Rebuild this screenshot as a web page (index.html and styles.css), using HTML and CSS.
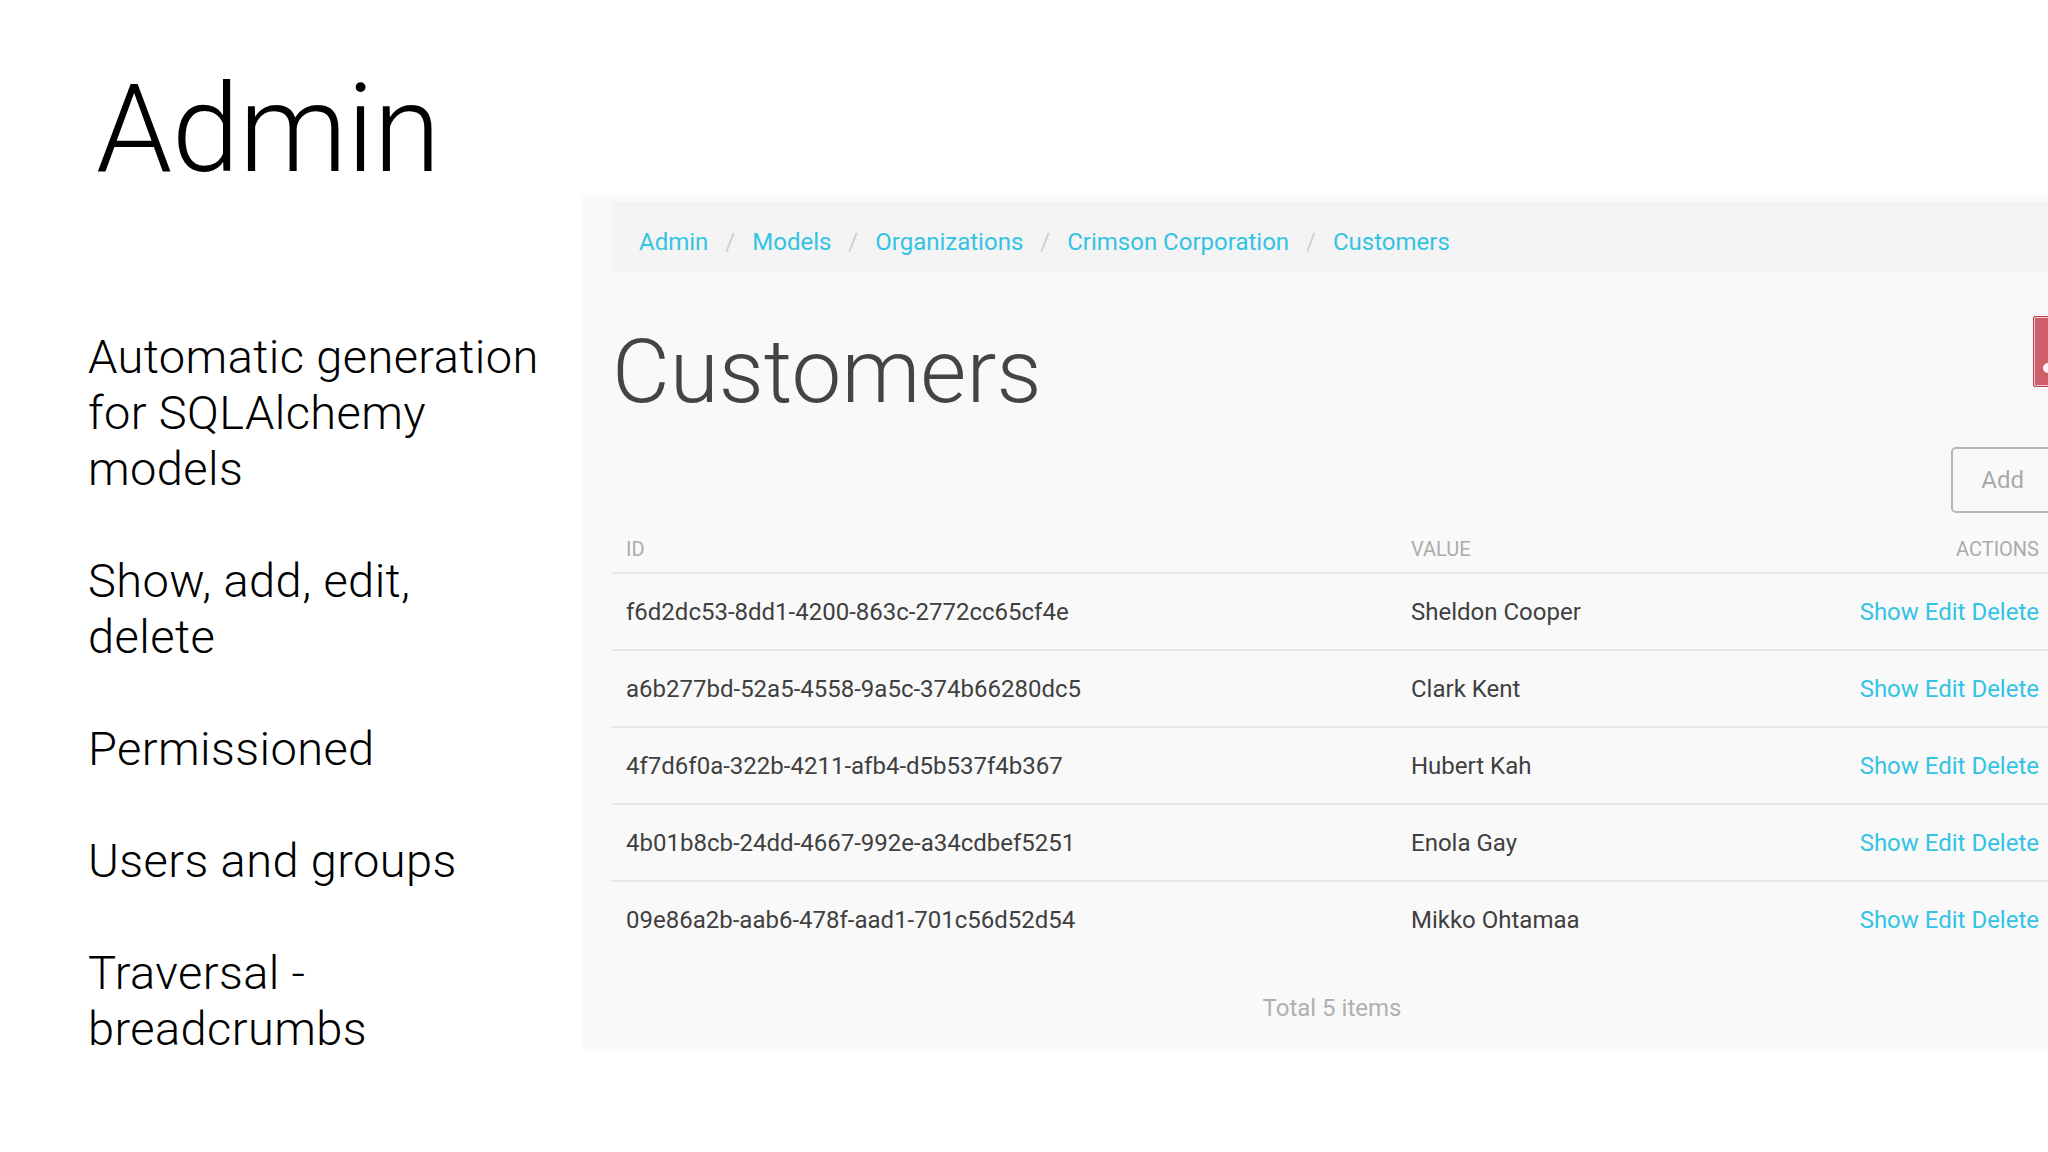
FILE: index.html
```html
<!DOCTYPE html>
<html lang="en">
<head>
<meta charset="utf-8">
<title>Admin</title>
<link rel="stylesheet" href="styles.css">
</head>
<body>
<div class="slide">
  <h1 class="title">Admin</h1>
  <div class="body">
    <div class="points">
      <p>Automatic generation<br>for SQLAlchemy<br>models</p>
      <p>Show, add, edit,<br>delete</p>
      <p>Permissioned</p>
      <p>Users and groups</p>
      <p>Traversal -<br>breadcrumbs</p>
    </div>
    <div class="panel">
      <nav class="crumbs">
        <a href="#">Admin</a><span class="sep">/</span>
        <a href="#">Models</a><span class="sep">/</span>
        <a href="#">Organizations</a><span class="sep">/</span>
        <a href="#">Crimson Corporation</a><span class="sep">/</span>
        <a href="#">Customers</a>
      </nav>
      <div class="headrow">
        <h2 class="heading">Customers</h2>
        <button class="danger"><span class="dot"></span></button>
      </div>
      <div class="toolbar">
        <button class="add">Add</button>
      </div>
      <table class="grid">
        <thead>
          <tr><th class="c-id">ID</th><th class="c-val">Value</th><th class="c-act">Actions</th></tr>
        </thead>
        <tbody>
          <tr><td>f6d2dc53-8dd1-4200-863c-2772cc65cf4e</td><td>Sheldon Cooper</td><td class="c-act"><a href="#">Show</a> <a href="#">Edit</a> <a href="#">Delete</a></td></tr>
          <tr><td>a6b277bd-52a5-4558-9a5c-374b66280dc5</td><td>Clark Kent</td><td class="c-act"><a href="#">Show</a> <a href="#">Edit</a> <a href="#">Delete</a></td></tr>
          <tr><td>4f7d6f0a-322b-4211-afb4-d5b537f4b367</td><td>Hubert Kah</td><td class="c-act"><a href="#">Show</a> <a href="#">Edit</a> <a href="#">Delete</a></td></tr>
          <tr><td>4b01b8cb-24dd-4667-992e-a34cdbef5251</td><td>Enola Gay</td><td class="c-act"><a href="#">Show</a> <a href="#">Edit</a> <a href="#">Delete</a></td></tr>
          <tr><td>09e86a2b-aab6-478f-aad1-701c56d52d54</td><td>Mikko Ohtamaa</td><td class="c-act"><a href="#">Show</a> <a href="#">Edit</a> <a href="#">Delete</a></td></tr>
        </tbody>
      </table>
      <div class="total">Total 5 items</div>
    </div>
  </div>
</div>
</body>
</html>
```

FILE: styles.css
```css
html, body {
  margin: 0;
  padding: 0;
}
body {
  width: 2048px;
  height: 1152px;
  overflow: hidden;
  background: #ffffff;
  font-family: Roboto, "Liberation Sans", sans-serif;
}
.slide {
  padding-top: 69px;
}
.title {
  margin: 0;
  padding-left: 96px;
  font-weight: 300;
  font-size: 122px;
  line-height: 122px;
  letter-spacing: -0.5px;
  color: #000;
}
.body {
  display: flex;
  margin-top: 5px;
}
.points {
  flex: 0 0 582px;
  box-sizing: border-box;
  padding: 133px 0 0 88px;
  font-weight: 300;
  font-size: 47px;
  line-height: 56px;
  letter-spacing: 0.4px;
  color: #000;
}
.points p {
  margin: 0 0 56px;
}
.panel {
  flex: 0 0 1500px;
  box-sizing: border-box;
  height: 853px;
  padding: 6px 30px 0;
  background: #f9f9fa;
}
.crumbs {
  display: flex;
  height: 70px;
  box-sizing: border-box;
  padding: 10px 27px 0;
  line-height: 60px;
  font-size: 24px;
  background: #f4f4f5;
  white-space: nowrap;
}
.crumbs a {
  color: #33c3e3;
  text-decoration: none;
}
.sep {
  color: #d0d0d0;
  margin: 0 17px;
}
.headrow {
  display: flex;
  justify-content: space-between;
  align-items: flex-start;
  margin-top: 44px;
}
.heading {
  margin: 8px 0 0;
  font-weight: 300;
  font-size: 89px;
  line-height: 96px;
  color: #444;
}
.danger {
  flex: 0 0 100px;
  height: 71px;
  margin-right: -81px;
  box-sizing: border-box;
  display: flex;
  align-items: flex-start;
  padding: 46px 0 0 9px;
  border: 1px solid #b8404f;
  border-radius: 2px;
  box-shadow: inset 0 0 0 1px #f1c9ce;
  background: #cf5f6c;
}
.dot {
  display: block;
  width: 10px;
  height: 10px;
  border-radius: 50%;
  background: #fdf3f4;
}
.toolbar {
  display: flex;
  justify-content: flex-end;
  margin-top: 27px;
}
.add {
  height: 66px;
  box-sizing: border-box;
  padding: 0 26px 0 28px;
  border: 2px solid #b5b5b5;
  border-radius: 5px;
  background: transparent;
  font-family: Roboto, "Liberation Sans", sans-serif;
  font-size: 24px;
  line-height: 62px;
  color: #a9a9a9;
}
.grid {
  width: 100%;
  border-collapse: separate;
  border-spacing: 0;
  font-size: 24px;
  color: #3f3f3f;
}
.grid th {
  padding: 22px 13px 9px 14px;
  font-weight: 400;
  font-size: 20px;
  line-height: 28px;
  text-transform: uppercase;
  text-align: left;
  color: #ababab;
  border-bottom: 2px solid #e6e6e8;
}
.grid th.c-act {
  text-align: right;
}
.grid .c-id {
  width: 758px;
}
.grid td {
  padding: 21px 13px 20px 14px;
  line-height: 34px;
  white-space: nowrap;
}
.grid tbody tr + tr td {
  border-top: 2px solid #e6e6e8;
}
.grid td.c-act {
  text-align: right;
}
.grid td a {
  color: #33c3e3;
  text-decoration: none;
}
.total {
  margin-top: 34px;
  text-align: center;
  font-size: 24px;
  line-height: 34px;
  color: #b0b0b0;
}
```
